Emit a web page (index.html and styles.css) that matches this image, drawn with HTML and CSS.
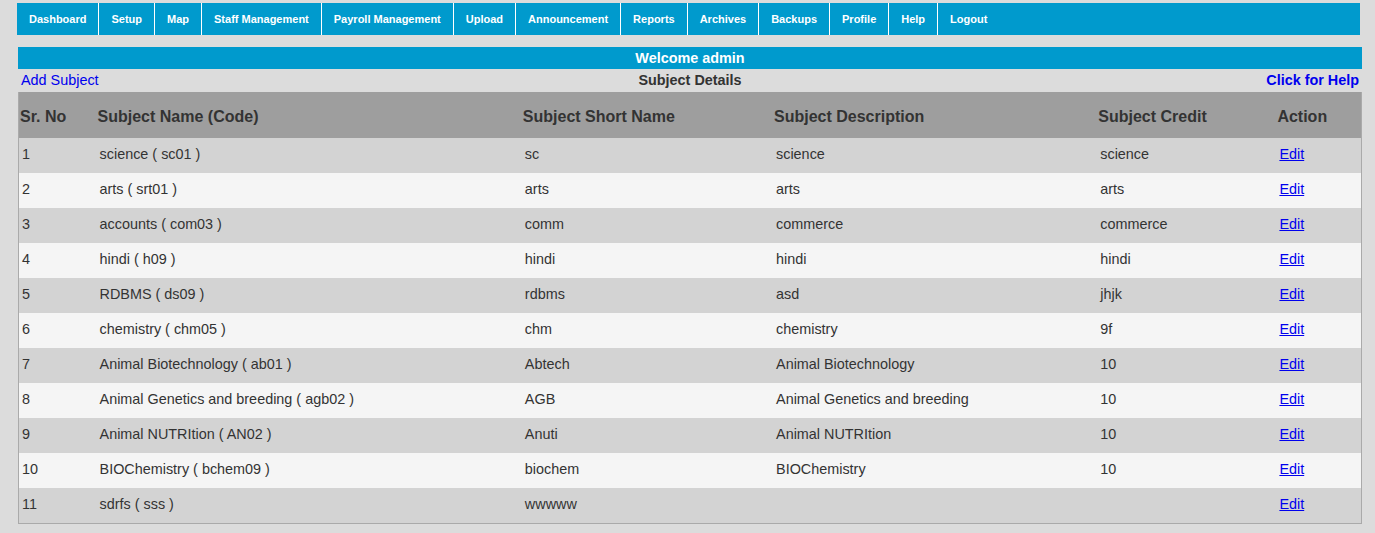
FILE: index.html
```html
<!DOCTYPE html>
<html>
<head>
<meta charset="utf-8">
<title>Subject Details</title>
<link rel="stylesheet" href="styles.css">
</head>
<body>
<div class="page">
  <nav class="menu">
    <a class="menu-item" href="#">Dashboard</a>
    <a class="menu-item" href="#">Setup</a>
    <a class="menu-item" href="#">Map</a>
    <a class="menu-item" href="#">Staff Management</a>
    <a class="menu-item" href="#">Payroll Management</a>
    <a class="menu-item" href="#">Upload</a>
    <a class="menu-item" href="#">Announcement</a>
    <a class="menu-item" href="#">Reports</a>
    <a class="menu-item" href="#">Archives</a>
    <a class="menu-item" href="#">Backups</a>
    <a class="menu-item" href="#">Profile</a>
    <a class="menu-item" href="#">Help</a>
    <a class="menu-item" href="#">Logout</a>
  </nav>
  <div class="content">
    <div class="welcome">Welcome admin</div>
    <div class="toolbar">
      <a class="add-link" href="#">Add Subject</a>
      <span class="title">Subject Details</span>
      <a class="help-link" href="#">Click for Help</a>
    </div>
    <table class="grid">
      <colgroup>
        <col class="c-sr"><col class="c-name"><col class="c-short"><col class="c-desc"><col class="c-credit"><col class="c-action">
      </colgroup>
      <thead>
        <tr><th>Sr. No</th><th>Subject Name (Code)</th><th>Subject Short Name</th><th>Subject Description</th><th>Subject Credit</th><th>Action</th></tr>
      </thead>
      <tbody>
        <tr><td>1</td><td>science ( sc01 )</td><td>sc</td><td>science</td><td>science</td><td><a href="#">Edit</a></td></tr>
        <tr><td>2</td><td>arts ( srt01 )</td><td>arts</td><td>arts</td><td>arts</td><td><a href="#">Edit</a></td></tr>
        <tr><td>3</td><td>accounts ( com03 )</td><td>comm</td><td>commerce</td><td>commerce</td><td><a href="#">Edit</a></td></tr>
        <tr><td>4</td><td>hindi ( h09 )</td><td>hindi</td><td>hindi</td><td>hindi</td><td><a href="#">Edit</a></td></tr>
        <tr><td>5</td><td>RDBMS ( ds09 )</td><td>rdbms</td><td>asd</td><td>jhjk</td><td><a href="#">Edit</a></td></tr>
        <tr><td>6</td><td>chemistry ( chm05 )</td><td>chm</td><td>chemistry</td><td>9f</td><td><a href="#">Edit</a></td></tr>
        <tr><td>7</td><td>Animal Biotechnology ( ab01 )</td><td>Abtech</td><td>Animal Biotechnology</td><td>10</td><td><a href="#">Edit</a></td></tr>
        <tr><td>8</td><td>Animal Genetics and breeding ( agb02 )</td><td>AGB</td><td>Animal Genetics and breeding</td><td>10</td><td><a href="#">Edit</a></td></tr>
        <tr><td>9</td><td>Animal NUTRItion ( AN02 )</td><td>Anuti</td><td>Animal NUTRItion</td><td>10</td><td><a href="#">Edit</a></td></tr>
        <tr><td>10</td><td>BIOChemistry ( bchem09 )</td><td>biochem</td><td>BIOChemistry</td><td>10</td><td><a href="#">Edit</a></td></tr>
        <tr><td>11</td><td>sdrfs ( sss )</td><td>wwwww</td><td></td><td></td><td><a href="#">Edit</a></td></tr>
      </tbody>
    </table>
  </div>
</div>
</body>
</html>
```
FILE: styles.css
```css
html, body {
  margin: 0;
  padding: 0;
  background: #dcdcdc;
  font-family: "Liberation Sans", Arial, sans-serif;
  color: #333;
}

.page {
  padding: 3px 0 0 17px;
}

.menu {
  display: flex;
  width: 1343px;
  height: 32px;
  background: #009acd;
}

.menu-item {
  display: block;
  padding: 0 12px;
  line-height: 32px;
  font-size: 11px;
  font-weight: bold;
  color: #fff;
  text-decoration: none;
  border-right: 1px solid #fff;
}

.menu-item:last-child {
  border-right: none;
}

.content {
  margin: 12px 0 0 1px;
  width: 1344px;
}

.welcome {
  height: 22px;
  line-height: 22px;
  background: #009acd;
  color: #fff;
  text-align: center;
  font-size: 14.4px;
  font-weight: bold;
}

.toolbar {
  display: flex;
  justify-content: space-between;
  align-items: center;
  height: 22px;
  padding: 0 3px 1px;
  font-size: 14.4px;
}

.add-link {
  flex: 1;
  color: #0000ee;
  text-decoration: none;
}

.title {
  font-weight: bold;
  color: #333;
}

.help-link {
  flex: 1;
  text-align: right;
  color: #0000ee;
  font-weight: bold;
  text-decoration: none;
}

.grid {
  width: 1344px;
  table-layout: fixed;
  border-collapse: collapse;
  border-spacing: 0;
  border: 1px solid #aaa;
  border-top: none;
}

.c-sr { width: 78px; }
.c-name { width: 425px; }
.c-short { width: 251px; }
.c-desc { width: 324px; }
.c-credit { width: 179px; }
.c-action { width: 85px; }

.grid th {
  height: 43px;
  padding: 3px 0 0 1px;
  background: #9e9e9e;
  text-align: left;
  font-size: 16px;
  font-weight: bold;
  color: #333;
}

.grid td {
  height: 32px;
  padding: 0 0 3px 3px;
  font-size: 14.4px;
  color: #333;
}

.grid tbody tr:nth-child(odd) td {
  background: #d3d3d3;
}

.grid tbody tr:nth-child(even) td {
  background: #f5f5f5;
}

.grid td a {
  color: #0000ee;
  text-decoration: underline;
}
```
